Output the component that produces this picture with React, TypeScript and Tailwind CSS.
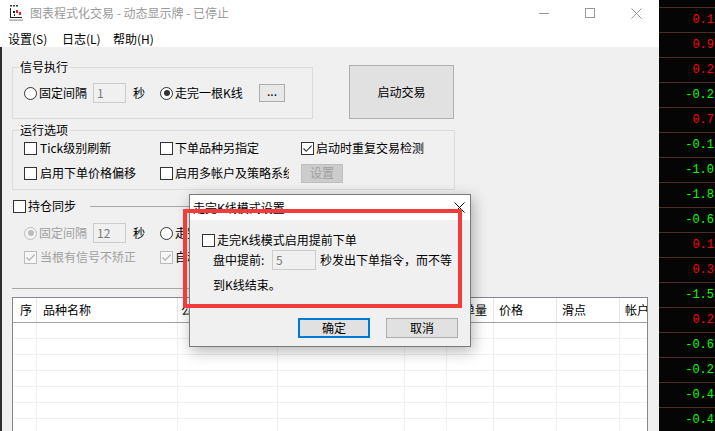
import React from "react";

type BoxProps = { checked?: boolean; disabled?: boolean };

const ticks = [
  "0.1", "0.9", "0.2", "-0.2", "0.7", "-0.1", "-1.0", "-1.8", "-0.6",
  "0.1", "0.3", "-1.5", "0.2", "-0.6", "-0.2", "-0.4", "-0.4",
];

const columns = [
  { title: "序", cls: "w-[24px] pl-[7px]" },
  { title: "品种名称", cls: "w-[141px] pl-[6px]" },
  { title: "公式名称", cls: "w-[100px] pl-[3px]" },
  { title: "周期", cls: "w-[127px] pl-[5px]" },
  { title: "方向", cls: "w-[42px] pl-[5px]" },
  { title: "下单量", cls: "w-[47px] pl-[4px]" },
  { title: "价格", cls: "w-[63px] pl-[5px]" },
  { title: "滑点", cls: "w-[63px] pl-[5px]" },
  { title: "帐户", cls: "w-[100px] pl-[5px]" },
];

function Check({ checked, disabled }: BoxProps) {
  return (
    <span
      className={`w-[13px] h-[13px] shrink-0 border flex items-center justify-center ${
        disabled ? "border-[#bcbcbc] bg-[#f7f7f7]" : "border-[#333333] bg-white"
      }`}
    >
      {checked && (
        <svg width="11" height="11" viewBox="0 0 11 11">
          <path
            d="M1.5 5.5L4.2 8.3L9.6 2.6"
            fill="none"
            stroke={disabled ? "#a9a9a9" : "#333333"}
            strokeWidth="1.1"
          />
        </svg>
      )}
    </span>
  );
}

function Radio({ checked, disabled }: BoxProps) {
  return (
    <span
      className={`w-[13px] h-[13px] shrink-0 rounded-full border flex items-center justify-center ${
        disabled ? "border-[#bcbcbc] bg-[#f4f4f4]" : "border-[#333333] bg-white"
      }`}
    >
      {checked && (
        <span className={`w-[6px] h-[6px] rounded-full ${disabled ? "bg-[#bcbcbc]" : "bg-[#333333]"}`} />
      )}
    </span>
  );
}

function Field({ value, className = "" }: { value: string; className?: string }) {
  return (
    <span
      className={`h-[20px] shrink-0 border border-[#cccccc] bg-[#f0f0f0] text-[#7a7a7a] pl-[3px] leading-[18px] ${className}`}
    >
      {value}
    </span>
  );
}

function AppIcon() {
  return (
    <svg width="16" height="17" viewBox="0 0 16 17">
      <rect x="2" y="0" width="2" height="1.5" fill="#333" />
      <rect x="5" y="0" width="2" height="1.5" fill="#333" />
      <rect x="8" y="0" width="2" height="1.5" fill="#333" />
      <rect x="2" y="3" width="1" height="9" fill="#222" />
      <rect x="2" y="12" width="12" height="1" fill="#222" />
      <rect x="5" y="6" width="2" height="2" fill="#222" />
      <rect x="8" y="5" width="2" height="3" fill="#e02020" />
      <rect x="11" y="7" width="2" height="3" fill="#e02020" />
      <rect x="6" y="9" width="1" height="2" fill="#222" />
      <rect x="1" y="14.5" width="14" height="1.2" fill="#9a9a9a" />
    </svg>
  );
}

function TitleBar() {
  return (
    <div className="flex h-[31px] bg-white">
      <div className="ml-[8px] mr-[6px] mt-[5px] w-[16px]">
        <AppIcon />
      </div>
      <div className="pt-[6px] text-[#999999] whitespace-nowrap">图表程式化交易 - 动态显示牌 - 已停止</div>
      <div className="ml-auto flex">
        <div className="w-[46px] h-[26px] flex items-center justify-center">
          <svg width="10" height="10" viewBox="0 0 10 10">
            <path d="M0 5.5H10" stroke="#999" strokeWidth="1" />
          </svg>
        </div>
        <div className="w-[46px] h-[26px] flex items-center justify-center">
          <svg width="10" height="10" viewBox="0 0 10 10">
            <rect x="0.5" y="0.5" width="9" height="9" fill="none" stroke="#999" strokeWidth="1" />
          </svg>
        </div>
        <div className="w-[46px] h-[26px] flex items-center justify-center">
          <svg width="11" height="11" viewBox="0 0 11 11">
            <path d="M0.5 0.5L10.5 10.5M10.5 0.5L0.5 10.5" stroke="#999" strokeWidth="1" />
          </svg>
        </div>
      </div>
    </div>
  );
}

function MenuBar() {
  return (
    <div className="flex h-[16px] bg-white leading-[16px] pl-[8px]">
      <span className="w-[54px]">设置(S)</span>
      <span className="w-[51px]">日志(L)</span>
      <span>帮助(H)</span>
    </div>
  );
}

function Dialog() {
  return (
    <div className="absolute left-[189px] top-[194px] w-[282px] h-[153px] border border-[#7a7a7a] bg-[#f0f0f0] shadow-[2px_4px_14px_rgba(0,0,0,0.3)] flex flex-col">
      <div className="h-[25px] bg-white flex items-center pl-[3px]">
        <span>走完K线模式设置</span>
        <svg className="ml-auto mr-[5px]" width="11" height="11" viewBox="0 0 11 11">
          <path d="M0.5 0.5L10.5 10.5M10.5 0.5L0.5 10.5" stroke="#111" strokeWidth="1" />
        </svg>
      </div>
      <div className="flex items-center h-[16px] mt-[12px] pl-[12px]">
        <Check />
        <span className="ml-[2px]">走完K线模式启用提前下单</span>
      </div>
      <div className="flex items-center h-[20px] mt-[2px] pl-[23px] whitespace-nowrap">
        <span className="w-[59px]">盘中提前:</span>
        <Field value="5" className="w-[44px]" />
        <span className="ml-[4px]">秒发出下单指令，而不等</span>
      </div>
      <div className="flex items-center h-[16px] mt-[7px] pl-[23px]">到K线结束。</div>
      <div className="flex justify-end gap-[16px] pr-[12px] mt-[25px]">
        <button className="w-[72px] h-[20px] border-2 border-[#0078d7] bg-[#e1e1e1] flex items-center justify-center">
          确定
        </button>
        <button className="w-[72px] h-[20px] border border-[#adadad] bg-[#e1e1e1] flex items-center justify-center">
          取消
        </button>
      </div>
    </div>
  );
}

function OrderTable() {
  return (
    <div className="mt-[8px] w-[636px] h-[150px] shrink-0 border border-[#828790] bg-white overflow-hidden">
      <div className="flex h-[25px] border-b border-[#a0a0a0] whitespace-nowrap">
        {columns.map((c) => (
          <div key={c.title} className={`${c.cls} shrink-0 border-r border-[#e5e5e5] flex items-center overflow-hidden`}>
            {c.title}
          </div>
        ))}
      </div>
      {[0, 1, 2, 3, 4, 5, 6, 7].map((r) => (
        <div key={r} className="flex h-[16px] border-b border-[#f0f0f0]">
          {columns.map((c) => (
            <div key={c.title} className={`${c.cls} shrink-0 border-r border-[#f0f0f0]`} />
          ))}
        </div>
      ))}
    </div>
  );
}

function MainWindow() {
  return (
    <div className="relative w-[659px] h-[431px] flex flex-col shrink-0">
      <TitleBar />
      <MenuBar />
      <div className="flex-1 flex flex-col border-l-2 border-[#2e2e2e] pl-[10px] min-h-0">
        {/* 信号执行 + 启动交易 */}
        <div className="flex items-start mt-[13px]">
          <fieldset className="w-[301px] border border-[#dcdcdc] pb-[15px]">
            <legend className="ml-[6px] px-[1px] leading-[14px]">信号执行</legend>
            <div className="flex items-center h-[20px] mt-[9px] pl-[11px]">
              <div className="w-[136px] flex items-center">
                <Radio />
                <span className="ml-[2px] w-[54px]">固定间隔</span>
                <Field value="1" className="w-[33px]" />
                <span className="ml-[7px]">秒</span>
              </div>
              <Radio checked />
              <span className="ml-[2px] w-[84px]">走完一根K线</span>
              <button className="w-[26px] h-[18px] border border-[#adadad] bg-[#e8e8e8] flex items-center justify-center leading-[10px] pb-[4px]">
                ...
              </button>
            </div>
          </fieldset>
          <button className="ml-[36px] mt-[5px] w-[105px] h-[54px] border border-[#adadad] bg-[#e1e1e1] flex items-center justify-center">
            启动交易
          </button>
        </div>

        {/* 运行选项 */}
        <fieldset className="mt-[4px] w-[443px] border border-[#dcdcdc] pb-[6px]">
          <legend className="ml-[6px] px-[1px] leading-[14px]">运行选项</legend>
          <div className="flex items-center h-[20px] mt-[1px] pl-[11px] whitespace-nowrap">
            <div className="w-[136px] flex items-center">
              <Check />
              <span className="ml-[3px]">Tick级别刷新</span>
            </div>
            <div className="w-[141px] flex items-center">
              <Check />
              <span className="ml-[2px]">下单品种另指定</span>
            </div>
            <Check checked />
            <span className="ml-[2px]">启动时重复交易检测</span>
          </div>
          <div className="flex items-center h-[20px] mt-[5px] pl-[11px] whitespace-nowrap">
            <div className="w-[136px] flex items-center">
              <Check />
              <span className="ml-[3px]">启用下单价格偏移</span>
            </div>
            <div className="w-[141px] flex items-center">
              <Check />
              <span className="ml-[2px] w-[114px] overflow-hidden">启用多帐户及策略系统</span>
            </div>
            <span className="w-[42px] h-[19px] border border-[#bfbfbf] bg-[#cccccc] text-[#a0a0a0] flex items-center justify-center">
              设置
            </span>
          </div>
        </fieldset>

        {/* 持仓同步 */}
        <div className="w-[443px] flex flex-col">
          <div className="flex items-center h-[16px] mt-[8px]">
            <span className="ml-[1px]">
              <Check />
            </span>
            <span className="ml-[2px]">持仓同步</span>
            <span className="ml-[14px] flex-1 h-px bg-[#a8a8a8]" />
          </div>
          <div className="flex items-center h-[20px] mt-[9px] pl-[12px] whitespace-nowrap">
            <div className="w-[136px] flex items-center">
              <Radio checked disabled />
              <span className="ml-[2px] w-[54px] text-[#a0a0a0]">固定间隔</span>
              <Field value="12" className="w-[33px]" />
              <span className="ml-[7px]">秒</span>
            </div>
            <Radio />
            <span className="ml-[2px]">走完一根K线</span>
          </div>
          <div className="flex items-center h-[16px] mt-[6px] pl-[12px] whitespace-nowrap">
            <div className="w-[136px] flex items-center">
              <Check checked disabled />
              <span className="ml-[3px] text-[#a0a0a0]">当根有信号不矫正</span>
            </div>
            <Check checked disabled />
            <span className="ml-[2px]">自动同步</span>
          </div>
          <div className="mt-[23px] h-px bg-[#a8a8a8]" />
        </div>

        <OrderTable />
      </div>

      <Dialog />
      <div className="absolute left-[183px] top-[209px] w-[279px] h-[99px] border-4 border-[#f23b3b]" />
    </div>
  );
}

function TickPanel() {
  return (
    <div className="flex-1 h-[431px] bg-[#050505] pt-[7px] font-['Liberation_Mono',monospace] text-[12px]">
      {ticks.map((v, i) => (
        <div
          key={i}
          className={`h-[25px] border-t border-[#4e2e20] flex items-center justify-end pr-[1px] ${
            v.startsWith("-") ? "text-[#00ff00]" : "text-[#ff0000]"
          }`}
        >
          {v}
        </div>
      ))}
    </div>
  );
}

export default function App() {
  return (
    <div className="w-[715px] h-[431px] overflow-hidden flex bg-[#f0f0f0] text-[12px] leading-[14px] text-black font-['Noto_Sans_CJK_SC',sans-serif]">
      <MainWindow />
      <TickPanel />
    </div>
  );
}
